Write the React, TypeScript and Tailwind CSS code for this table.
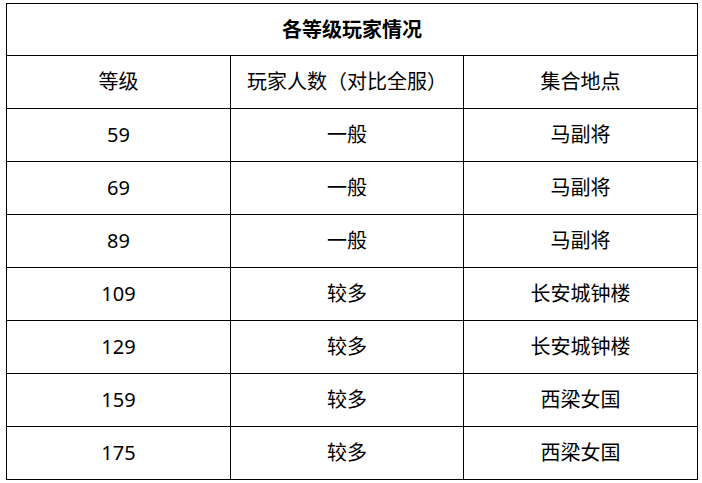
const rows = [
  ["59", "一般", "马副将"],
  ["69", "一般", "马副将"],
  ["89", "一般", "马副将"],
  ["109", "较多", "长安城钟楼"],
  ["129", "较多", "长安城钟楼"],
  ["159", "较多", "西梁女国"],
  ["175", "较多", "西梁女国"],
];

const App = () => {
  return (
    <div
      className="w-[702px] h-[483px] bg-white pl-[6px] pt-[3px] text-black"
      style={{ fontFamily: "'Noto Sans', 'Noto Sans CJK SC', sans-serif" }}
    >
      <table className="w-[691px] border-collapse table-fixed text-[20px]">
        <colgroup>
          <col className="w-[224px]" />
          <col className="w-[233px]" />
          <col className="w-[234px]" />
        </colgroup>
        <thead>
          <tr className="h-[52px]">
            <th colSpan={3} className="border border-black text-[20px] font-bold text-center p-0">
              各等级玩家情况
            </th>
          </tr>
        </thead>
        <tbody>
          <tr className="h-[53px]">
            <td className="border border-black text-center p-0">等级</td>
            <td className="border border-black text-center p-0">玩家人数（对比全服）</td>
            <td className="border border-black text-center p-0">集合地点</td>
          </tr>
          {rows.map((r, i) => (
            <tr key={i} className="h-[53px]">
              {r.map((c, j) => (
                <td key={j} className="border border-black text-center p-0">
                  {c}
                </td>
              ))}
            </tr>
          ))}
        </tbody>
      </table>
    </div>
  );
};

export default App;
